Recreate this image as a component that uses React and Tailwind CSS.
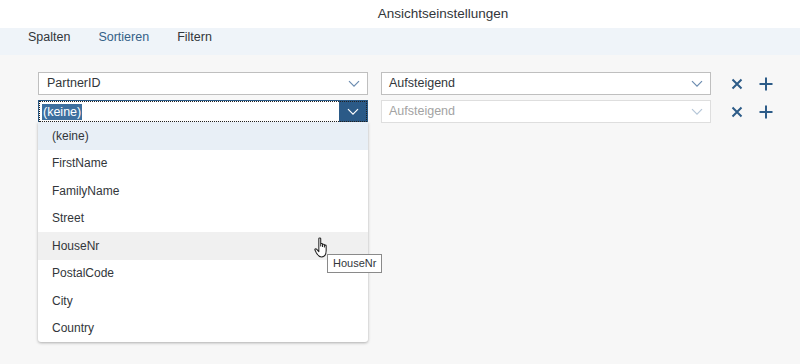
import React from 'react';

const font = { fontFamily: '"Liberation Sans", Arial, sans-serif' };

function Chevron({ color = '#6c8cb0', size = 12 }) {
    return (
        <svg width={size} height={size * 0.6} viewBox="0 0 12 7" fill="none">
            <polyline points="1,1 6,6 11,1" stroke={color} strokeWidth="1.2" />
        </svg>
    );
}

function XIcon() {
    return (
        <svg width="12" height="12" viewBox="0 0 12 12">
            <path d="M1.5 1.5 L10.5 10.5 M10.5 1.5 L1.5 10.5" stroke="#2d5c88" strokeWidth="2" />
        </svg>
    );
}

function PlusIcon() {
    return (
        <svg width="14" height="14" viewBox="0 0 14 14">
            <path d="M7 0.5 V13.5 M0.5 7 H13.5" stroke="#2d5c88" strokeWidth="2" />
        </svg>
    );
}

function Hand() {
    return (
        <svg width="17" height="22" viewBox="0 0 16 21">
            <path
                d="M4.5 1.5 C4.5 0.7 6.3 0.7 6.3 1.5 V8.5 V6.8 C6.3 6 8 6 8 6.8 V9 V7.5 C8 6.7 9.8 6.7 9.8 7.5 V9.5 V8.3 C9.8 7.5 11.5 7.5 11.5 8.3 V13 C11.5 16.5 10 19 7 19 C4.5 19 3.5 17.5 2.2 15.2 L0.8 12.5 C0.4 11.7 1.5 10.8 2.3 11.6 L4.5 14 Z"
                fill="#fff"
                stroke="#222"
                strokeWidth="1"
                strokeLinejoin="round"
            />
        </svg>
    );
}

const items = ['(keine)', 'FirstName', 'FamilyName', 'Street', 'HouseNr', 'PostalCode', 'City', 'Country'];

export default function App() {
    return (
        <div className="w-[800px] h-[364px] bg-[#f7f7f7] text-[#32363a] overflow-hidden" style={font}>
            <header className="h-[28px] bg-white flex items-center justify-center pl-[86px]">
                <span className="text-[13.5px] text-[#32363a]">Ansichtseinstellungen</span>
            </header>
            <nav className="h-[27px] bg-[#eff4f9] flex items-center gap-[28px] pl-[28px] pb-[8px] text-[12.5px]">
                <span>Spalten</span>
                <span className="text-[#346187]">Sortieren</span>
                <span>Filtern</span>
            </nav>
            <div className="pt-[17px] pl-[38px] flex flex-col gap-[5px]">
                <div className="flex items-center">
                    <div className="w-[330px] h-[23px] bg-white border border-[#bfbfbf] flex items-center justify-between pl-[8px] pr-[7px] text-[12.5px]">
                        <span>PartnerID</span>
                        <Chevron />
                    </div>
                    <div className="ml-[13px] w-[330px] h-[23px] bg-white border border-[#bfbfbf] flex items-center justify-between pl-[7px] pr-[7px] text-[12.5px]">
                        <span>Aufsteigend</span>
                        <Chevron />
                    </div>
                    <div className="ml-[20px] flex items-center gap-[16px]">
                        <XIcon />
                        <PlusIcon />
                    </div>
                </div>
                <div className="flex items-start">
                    <div className="relative w-[330px]">
                        <div className="h-[23px] bg-white border border-[#2b5a87] flex items-stretch outline outline-1 outline-dotted outline-[#222] -outline-offset-2 text-[12.5px]">
                            <div className="flex-1 flex items-center pl-[3px]">
                                <span className="bg-[#3d6f9f] text-white px-[1px] leading-[16px]">(keine)</span>
                            </div>
                            <div className="w-[28px] bg-[#2b5a87] flex items-center justify-center">
                                <Chevron color="#ffffff" />
                            </div>
                        </div>
                        <ul className="absolute left-0 top-[22px] w-[330px] bg-white shadow-[0_1px_3px_rgba(0,0,0,0.3)] rounded-b-[3px] text-[12px] z-10">
                            {items.map((it, i) => (
                                <li
                                    key={it}
                                    className={`h-[27.5px] flex items-center pl-[14px] ${i === 0 ? 'bg-[#e8eff6]' : i === 4 ? 'bg-[#f0f0f0]' : ''}`}
                                >
                                    {it}
                                </li>
                            ))}
                        </ul>
                        <div className="absolute left-[276px] top-[137px] z-20">
                            <Hand />
                        </div>
                        <div className="absolute left-[289px] top-[154px] z-20 bg-white border border-[#8a8a8a] px-[5px] h-[19px] flex items-center text-[11px] whitespace-nowrap">
                            HouseNr
                        </div>
                    </div>
                    <div className="ml-[13px] w-[330px] h-[23px] bg-white border border-[#dedede] flex items-center justify-between pl-[7px] pr-[7px] text-[12.5px] text-[#a3a3a3]">
                        <span>Aufsteigend</span>
                        <Chevron color="#b5c6d8" />
                    </div>
                    <div className="ml-[20px] h-[23px] flex items-center gap-[16px]">
                        <XIcon />
                        <PlusIcon />
                    </div>
                </div>
            </div>
        </div>
    );
}
